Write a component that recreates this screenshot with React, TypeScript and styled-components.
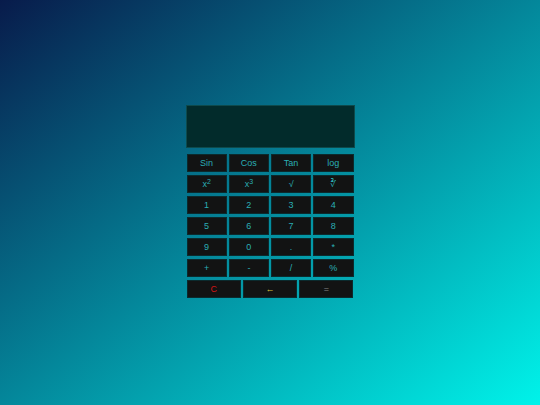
import React from 'react';
import styled, { createGlobalStyle } from 'styled-components';

const GlobalStyle = createGlobalStyle`
  html, body {
    margin: 0;
    padding: 0;
    height: 100%;
  }
  body {
    background: linear-gradient(to bottom right, #081b4b, #00f3ea);
    font-family: 'Liberation Sans', Arial, sans-serif;
  }
  #root {
    height: 100%;
  }
`;

const Page = styled.div`
  height: 100%;
  box-sizing: border-box;
  padding-bottom: 2px;
  display: flex;
  align-items: center;
  justify-content: center;
`;

const Calculator = styled.div`
  width: 169px;
  display: flex;
  flex-direction: column;
  gap: 6px;
`;

const Display = styled.div`
  height: 43px;
  background: #022b2b;
  border: 1px solid #0e4a4c;
  color: #2bb5c0;
  font-size: 14px;
  text-align: right;
  padding: 0 6px;
  box-sizing: border-box;
`;

const Keys = styled.div<{ cols: number }>`
  display: grid;
  grid-template-columns: repeat(${p => p.cols}, 1fr);
  column-gap: 2px;
  padding: 0 1px;
`;

const Rows = styled.div`
  display: flex;
  flex-direction: column;
  gap: 3px;
`;

const Key = styled.button<{ tone?: 'red' | 'yellow' | 'grey' }>`
  height: 18px;
  margin: 0;
  padding: 0;
  background: #121313;
  border: 1px solid #0b2a2d;
  font-family: 'Liberation Sans', Arial, sans-serif;
  font-size: 9px;
  line-height: 16px;
  color: ${p =>
    p.tone === 'red' ? '#d21515' : p.tone === 'yellow' ? '#d8c23a' : p.tone === 'grey' ? '#8a8a8a' : '#2aaeb4'};
  cursor: pointer;

  sup {
    font-size: 7px;
    line-height: 0;
    vertical-align: 3px;
  }
`;

const rows: React.ReactNode[][] = [
  ['Sin', 'Cos', 'Tan', 'log'],
  [
    <>x<sup>2</sup></>,
    <>x<sup>3</sup></>,
    '√',
    '∛',
  ],
  ['1', '2', '3', '4'],
  ['5', '6', '7', '8'],
  ['9', '0', '.', '*'],
  ['+', '-', '/', '%'],
];

export default function App() {
  return (
    <Page>
      <GlobalStyle />
      <Calculator>
        <Display />
        <Rows>
          {rows.map((row, i) => (
            <Keys cols={4} key={i}>
              {row.map((k, j) => (
                <Key key={j}>{k}</Key>
              ))}
            </Keys>
          ))}
          <Keys cols={3}>
            <Key tone="red">C</Key>
            <Key tone="yellow">←</Key>
            <Key tone="grey">=</Key>
          </Keys>
        </Rows>
      </Calculator>
    </Page>
  );
}
